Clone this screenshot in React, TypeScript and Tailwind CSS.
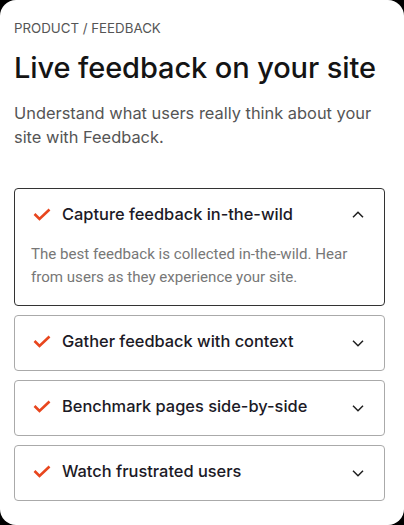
import { useState } from "react";

const items = [
  {
    title: "Capture feedback in-the-wild",
    body: "The best feedback is collected in-the-wild. Hear from users as they experience your site.",
  },
  { title: "Gather feedback with context", body: "" },
  { title: "Benchmark pages side-by-side", body: "" },
  { title: "Watch frustrated users", body: "" },
];

const Check = () => (
  <svg width="18" height="13" viewBox="0 0 18 13" fill="none" className="shrink-0">
    <path d="M1.5 6 L6.5 11 L16.5 1.5" stroke="#e8461e" strokeWidth="2.6" />
  </svg>
);

const Chevron = ({ up }: { up: boolean }) => (
  <svg width="12" height="7" viewBox="0 0 12 7" fill="none" className={`shrink-0 ${up ? "" : "mt-[5px]"}`}>
    <path
      d={up ? "M1 6.2 L6 1.2 L11 6.2" : "M1 0.8 L6 5.8 L11 0.8"}
      stroke="#1f1f1f"
      strokeWidth="1.5"
    />
  </svg>
);

export default function App() {
  const [open, setOpen] = useState(0);
  return (
    <div className="bg-black w-[404px] h-[525px]" style={{ fontFamily: "Inter, 'Noto Sans', sans-serif" }}>
      <div className="bg-white rounded-2xl h-[525px] pl-[14px] pr-[19px] pt-[20px]">
        <p className="text-[13.3px] leading-4 text-[#555]">PRODUCT / FEEDBACK</p>
        <h1 className="mt-[14px] text-[29px] leading-9 font-medium text-[#141414] tracking-[-0.1px]">
          Live feedback on your site
        </h1>
        <p className="mt-[15px] text-[16.4px] leading-6 text-[#555]">
          Understand what users really think about your site with Feedback.
        </p>
        <div className="mt-[39px] flex flex-col gap-[9px]">
          {items.map((it, i) => {
            const isOpen = open === i;
            return (
              <div
                key={it.title}
                className={`rounded-[4px] border ${isOpen ? "border-[#333]" : "border-[#aaa]"}`}
              >
                <button
                  onClick={() => setOpen(isOpen ? -1 : i)}
                  className="w-full flex items-center pt-[13px] pb-[17px] pl-[18px] pr-[20px] text-left"
                >
                  <Check />
                  <span className="ml-[11px] flex-1 text-[16.4px] leading-6 font-medium text-[#1c1a26]">
                    {it.title}
                  </span>
                  <Chevron up={isOpen} />
                </button>
                {isOpen && (
                  <p
                    className="pl-[16px] pr-[20px] pb-[16px] text-[15.1px] leading-[23px] text-[#777]"
                    style={{ fontFamily: "Roboto, sans-serif" }}
                  >
                    {it.body}
                  </p>
                )}
              </div>
            );
          })}
        </div>
      </div>
    </div>
  );
}
